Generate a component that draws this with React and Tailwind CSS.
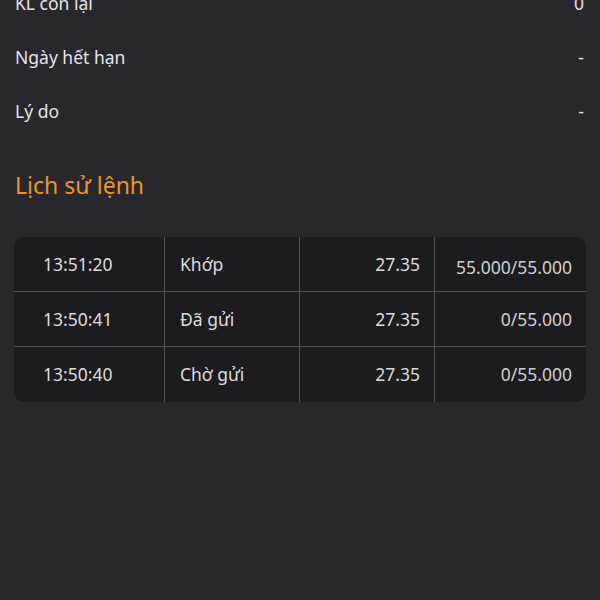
const info = [
  { label: "KL còn lại", value: "0" },
  { label: "Ngày hết hạn", value: "-" },
  { label: "Lý do", value: "-" },
];

const history = [
  { time: "13:51:20", status: "Khớp", price: "27.35", qty: "55.000/55.000" },
  { time: "13:50:41", status: "Đã gửi", price: "27.35", qty: "0/55.000" },
  { time: "13:50:40", status: "Chờ gửi", price: "27.35", qty: "0/55.000" },
];

export default function App() {
  return (
    <div
      className="w-[600px] h-[600px] overflow-hidden bg-[#28272d] text-[#e4e4e6]"
      style={{ fontFamily: '"Noto Sans", "Open Sans", sans-serif' }}
    >
      {/* order info rows */}
      <div className="mt-[-24px] px-[15px]">
        {info.map((row) => (
          <div key={row.label} className="h-[54px] flex items-center justify-between text-[17.5px]">
            <span>{row.label}</span>
            <span className="pr-[1px]">{row.value}</span>
          </div>
        ))}
      </div>

      <h2 className="mt-[32px] px-[15px] h-[30px] flex items-center text-[23px] text-[#e9952e]">
        Lịch sử lệnh
      </h2>

      {/* order history table */}
      <div className="mt-[37px] mx-[14px] rounded-[10px] bg-[#1c1b20] overflow-hidden text-[17.5px] text-[#dcdcde]">
        {history.map((r, i) => (
          <div
            key={r.time}
            className={`flex h-[55px] ${i < history.length - 1 ? "border-b border-[#525157]" : ""}`}
          >
            <div className="w-[151px] flex items-center pl-[29px] border-r border-[#525157]">
              {r.time}
            </div>
            <div className="w-[135px] flex items-center pl-[15px] border-r border-[#525157]">
              {r.status}
            </div>
            <div className="w-[135px] flex items-center justify-end pr-[14px] border-r border-[#525157]">
              {r.price}
            </div>
            <div className={`flex-1 flex items-center justify-end pr-[14px] text-[#cfcfd2] ${i === 0 ? "pt-[6px]" : ""}`}>
              {r.qty}
            </div>
          </div>
        ))}
      </div>
    </div>
  );
}
